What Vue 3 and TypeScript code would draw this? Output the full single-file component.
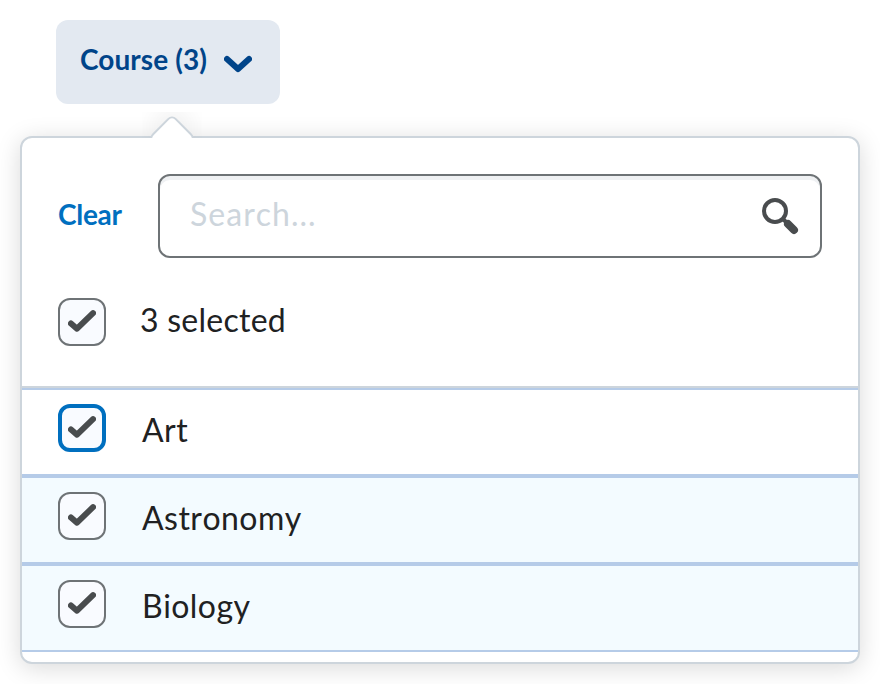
<script setup lang="ts">
import { ref, computed } from 'vue'

interface Course {
  name: string
  selected: boolean
  focused?: boolean
}

const courses = ref<Course[]>([
  { name: 'Art', selected: true, focused: true },
  { name: 'Astronomy', selected: true },
  { name: 'Biology', selected: true },
])
const query = ref('')
const count = computed(() => courses.value.filter((c) => c.selected).length)

function clearAll() {
  courses.value.forEach((c) => (c.selected = false))
}
</script>

<template>
  <div class="filter">
    <button class="opener" type="button">
      <span class="opener-text">Course ({{ count }})</span>
      <svg class="chevron" width="28" height="18" viewBox="0 0 28 18">
        <path d="M3 4 L14 14 L25 4" />
      </svg>
    </button>

    <div class="panel">
      <div class="pointer"><div class="pointer-tip"></div></div>
      <div class="header">
        <button class="clear" type="button" @click="clearAll">Clear</button>
        <div class="search">
          <input v-model="query" type="text" placeholder="Search..." />
          <svg class="magnifier" width="40" height="40" viewBox="0 0 40 40">
            <circle cx="15" cy="15" r="11" />
            <path class="neck" d="M22 22 L27 27" />
            <path class="handle" d="M28 28 L34 34" />
          </svg>
        </div>
      </div>
      <div class="summary">
        <span class="box">
          <svg width="28" height="24" viewBox="0 0 28 24"><path d="M3 13.5 L9 18.7 L25 3.2" /></svg>
        </span>
        <span class="summary-text">{{ count }} selected</span>
      </div>
      <ul class="list">
        <li v-for="c in courses" :key="c.name" :class="{ tinted: c.selected && !c.focused }" @click="c.selected = !c.selected">
          <span class="box" :class="{ focused: c.focused }">
            <svg v-if="c.selected" width="28" height="24" viewBox="0 0 28 24"><path d="M3 13.5 L9 18.7 L25 3.2" /></svg>
          </span>
          <span class="label">{{ c.name }}</span>
        </li>
      </ul>
    </div>
  </div>
</template>

<style>
body {
  background: #fff;
  overflow: hidden;
}
</style>

<style scoped>
* {
  box-sizing: border-box;
}
.filter {
  height: 684px;
  padding: 20px 20px 0;
  font-family: Lato, 'Liberation Sans', sans-serif;
  color: #202122;
}
button {
  border: 0;
  padding: 0;
  font: 700 28px/40px Lato, 'Liberation Sans', sans-serif;
}
.opener {
  display: flex;
  align-items: center;
  width: 224px;
  height: 84px;
  margin-left: 36px;
  padding: 0 24px 4px;
  border-radius: 12px;
  background: #e3e9f1;
  color: #004489;
  letter-spacing: 0.08px;
  white-space: nowrap;
}
.opener-text {
  width: 144px;
  padding-bottom: 2px;
  text-align: left;
}
.chevron {
  flex: none;
  margin-top: 7px;
}
.chevron path {
  fill: none;
  stroke: #004489;
  stroke-width: 6;
  stroke-linecap: round;
  stroke-linejoin: round;
}
.panel {
  position: relative;
  height: 528px;
  margin-top: 32px;
  border: 2px solid #cdd5dc;
  border-radius: 12px;
  background: #fff;
  box-shadow: 0 4px 24px rgba(0, 0, 0, 0.15);
}
.pointer {
  position: absolute;
  left: 120px;
  top: -26px;
  width: 60px;
  height: 26px;
  overflow: hidden;
}
.pointer-tip {
  width: 34px;
  height: 34px;
  margin: 9px 13px 0;
  border: 2px solid #cdd5dc;
  border-radius: 6px;
  background: #fff;
  box-shadow: -8px -8px 24px rgba(0, 0, 0, 0.06);
  transform: rotate(45deg);
}
.header {
  display: flex;
  align-items: center;
  padding: 36px 36px 0;
}
.clear {
  width: 100px;
  padding-bottom: 4px;
  text-align: left;
  background: none;
  color: #006fbf;
  letter-spacing: -0.3px;
}
.search {
  display: flex;
  align-items: center;
  flex: 1;
  height: 84px;
  padding: 0 20px 0 30px;
  border: 2px solid #6e7376;
  border-radius: 12px;
  box-shadow: inset 0 4px 0 #eff1f3;
}
.search input {
  flex: 1;
  min-width: 0;
  padding: 0 0 4px;
  border: 0;
  outline: 0;
  background: none;
  font: 400 32px/44px Lato, 'Liberation Sans', sans-serif;
  letter-spacing: 1px;
  font-kerning: none;
  color: #202122;
}
.search input::placeholder {
  color: #cdd5dc;
  opacity: 1;
}
.magnifier {
  flex: none;
}
.magnifier circle,
.magnifier path {
  fill: none;
  stroke: #494c4e;
  stroke-width: 4;
}
.magnifier .handle {
  stroke-width: 8;
  stroke-linecap: round;
}
.summary {
  display: flex;
  align-items: flex-start;
  height: 130px;
  padding: 40px 36px 0;
  border-bottom: 2px solid #cdd5dc;
}
.box {
  display: flex;
  align-items: center;
  justify-content: center;
  flex: none;
  width: 48px;
  height: 48px;
  padding-bottom: 1px;
  border: 2px solid #6e7376;
  border-radius: 12px;
  background: #f9fbff;
}
.box.focused {
  border: 4px solid #006fbf;
}
.box path {
  fill: none;
  stroke: #494c4e;
  stroke-width: 6;
  stroke-linecap: round;
  stroke-linejoin: round;
}
.summary-text,
.label {
  margin-left: 36px;
  font-size: 32px;
  line-height: 44px;
  letter-spacing: 0.45px;
  font-kerning: none;
}
.summary-text {
  margin-left: 34px;
  letter-spacing: 0.25px;
}
.list {
  margin: 0;
  padding: 0;
  list-style: none;
}
.list li {
  display: flex;
  align-items: flex-start;
  height: 88px;
  padding: 14px 36px 0;
  border-top: 2px solid #b5cbe8;
  border-bottom: 2px solid #b5cbe8;
}
.list li.tinted {
  background: #f3fbff;
}
.label {
  margin-top: 4px;
}
</style>
